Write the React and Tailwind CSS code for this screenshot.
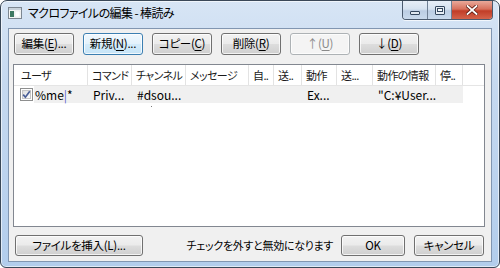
import React from 'react';

const cols = [
  { label: 'ユーザ', w: 74 },
  { label: 'コマンド', w: 44 },
  { label: 'チャンネル', w: 54 },
  { label: 'メッセージ', w: 63 },
  { label: '自..', w: 25 },
  { label: '送..', w: 28 },
  { label: '動作', w: 35 },
  { label: '送...', w: 36 },
  { label: '動作の情報', w: 63 },
  { label: '停..', w: 27 },
];

const row = ['', 'Priv...', '#dsou...', '', '', '', 'Ex...', '', '"C:¥User...', ''];

function Btn({ children, className = '', kind = 'normal' }) {
  const look = {
    normal:
      'border-[#707070] text-black bg-[linear-gradient(to_bottom,#f2f2f2_0%,#ebebeb_48%,#dddddd_52%,#cfcfcf_100%)]',
    hot:
      'border-[#3c7fb1] text-black bg-[linear-gradient(to_bottom,#f1f8fd_0%,#e3f2fc_48%,#d3ebfa_52%,#c6e4f7_100%)]',
    disabled: 'border-[#adb2b5] text-[#8a8a8a] bg-[#f4f4f4]',
  }[kind];
  return (
    <div
      className={`flex items-center justify-center rounded-[3px] border text-[11.5px] tracking-[-0.3px] leading-none whitespace-nowrap shadow-[inset_0_0_0_1px_rgba(255,255,255,0.75)] ${look} ${className}`}
    >
      {children}
    </div>
  );
}

function U({ children }) {
  return <span className="underline underline-offset-[2px]">{children}</span>;
}

function CheckBox() {
  return (
    <svg width="13" height="13" viewBox="0 0 13 13" className="shrink-0">
      <defs>
        <linearGradient id="cb" x1="0" y1="0" x2="1" y2="1">
          <stop offset="0" stopColor="#dcdcdc" />
          <stop offset="1" stopColor="#ffffff" />
        </linearGradient>
      </defs>
      <rect x="0.5" y="0.5" width="12" height="12" fill="#fff" stroke="#8e8f8f" />
      <rect x="2.5" y="2.5" width="8" height="8" fill="url(#cb)" stroke="#c6c6c6" />
      <path d="M3.2 6.6 L5.4 9.2 L9.8 3.2" fill="none" stroke="#4a5f97" strokeWidth="1.7" />
    </svg>
  );
}

function AppIcon() {
  return (
    <svg width="14" height="12" viewBox="0 0 14 12">
      <rect x="0.5" y="0.5" width="13" height="11" fill="#f7f7f7" stroke="#7d8792" />
      <rect x="1" y="1" width="12" height="2" fill="#c9d3dc" />
      <rect x="2" y="4" width="4" height="6" fill="#3f7a63" />
      <rect x="7" y="4" width="5" height="6" fill="#ffffff" stroke="#d7dde2" strokeWidth="0.5" />
    </svg>
  );
}

function CaptionButtons() {
  return (
    <div className="flex self-start h-[19px] rounded-b-[4px] border border-t-0 border-[#4b5a6e] overflow-hidden shadow-[0_1px_0_rgba(255,255,255,0.7)]">
      <div className="w-[25px] flex items-center justify-center border-r border-[#6f7f94] bg-[linear-gradient(to_bottom,#e7eef7_0%,#d6e2f0_45%,#bccde3_55%,#c9d9ec_100%)]">
        <div className="w-[10px] h-[4px] mt-[5px] rounded-[1px] border border-[#35475e] bg-[#dfe7f0]" />
      </div>
      <div className="w-[24px] flex items-center justify-center border-r border-[#6f7f94] bg-[linear-gradient(to_bottom,#e7eef7_0%,#d6e2f0_45%,#bccde3_55%,#c9d9ec_100%)]">
        <div className="w-[10px] h-[9px] rounded-[1px] border border-[#35475e] flex items-center justify-center bg-[#e7edf4]">
          <div className="w-[6px] h-[4px] border border-[#35475e] bg-[#f4f7fa]" />
        </div>
      </div>
      <div className="w-[40px] flex items-center justify-center bg-[linear-gradient(to_bottom,#e9a99a_0%,#d7705c_45%,#c13d27_55%,#d4634b_100%)]">
        <svg width="12" height="10" viewBox="0 0 12 10">
          <path d="M1.5 1 L10.5 9 M10.5 1 L1.5 9" stroke="#5b1a10" strokeWidth="3.4" strokeLinecap="square" />
          <path d="M1.5 1 L10.5 9 M10.5 1 L1.5 9" stroke="#ffffff" strokeWidth="1.8" strokeLinecap="square" />
        </svg>
      </div>
    </div>
  );
}

export default function App() {
  return (
    <div className="w-[500px] h-[268px] bg-white font-['Noto_Sans_CJK_JP','Noto_Sans',sans-serif] [font-feature-settings:'palt']">
      <div className="w-full h-full flex flex-col rounded-t-[7px] rounded-b-[6px] border border-[#3a4858] bg-[linear-gradient(to_bottom,#d7e5f5_0%,#c6d9f0_30%,#b2cdec_100%)] shadow-[inset_0_0_0_1px_rgba(255,255,255,0.6)]">
        <div className="h-[27px] flex items-start pl-[7px] pr-[6px] shrink-0">
          <div className="flex items-center gap-[6px] mt-[6px]">
            <AppIcon />
            <span className="text-[12px] tracking-[-0.6px] leading-none text-black">マクロファイルの編集 - 棒読み</span>
          </div>
          <div className="ml-auto">
            <CaptionButtons />
          </div>
        </div>

        <div className="flex-1 mx-[7px] mb-[5px] border border-[#8196b1] bg-[#f0f0f0] flex flex-col px-[4px] pt-[4px]">
          <div className="flex gap-[9px] pl-[1px]">
            <Btn className="w-[60px] h-[22px]">編集(<U>E</U>)...</Btn>
            <Btn className="w-[60px] h-[22px]" kind="hot">新規(<U>N</U>)...</Btn>
            <Btn className="w-[60px] h-[22px]">コピー(<U>C</U>)</Btn>
            <Btn className="w-[60px] h-[22px]">削除(<U>R</U>)</Btn>
            <Btn className="w-[60px] h-[22px]" kind="disabled">↑(<U>U</U>)</Btn>
            <Btn className="w-[60px] h-[22px]">↓(<U>D</U>)</Btn>
          </div>

          <div className="mt-[9px] w-[472px] h-[163px] border border-[#828790] bg-white flex flex-col">
            <div className="flex h-[21px] border-b border-[#e5e5e5] bg-white">
              {cols.map((c, i) => (
                <div
                  key={i}
                  style={{ width: c.w }}
                  className={`shrink-0 flex items-center border-r border-[#e3e3e3] text-[11px] tracking-[-0.6px] leading-none text-[#1a1a1a] whitespace-nowrap overflow-hidden ${i === 0 ? 'pl-[7px]' : 'pl-[4px]'}`}
                >
                  {c.label}
                </div>
              ))}
              <div className="flex-1" />
            </div>
            <div className="flex h-[17px] items-center">
              <div className="w-[20px] shrink-0 flex items-center justify-end pr-[1px]">
                <CheckBox />
              </div>
              <div className="flex h-full bg-[#f0f0f0]">
                <div className="w-[54px] shrink-0 flex items-center text-[12px] leading-none text-black pl-[1px]">
                  %me<span className="text-[#5b63c8]">|</span>*
                </div>
                {row.slice(1).map((t, i) => (
                  <div
                    key={i}
                    style={{ width: cols[i + 1].w }}
                    className="shrink-0 flex items-center pl-[5px] text-[12px] leading-none text-black whitespace-nowrap overflow-hidden"
                  >
                    {t}
                  </div>
                ))}
              </div>
            </div>
            <div className="ml-[137px] mt-[3px] w-[1px] h-[1px] bg-[#7a7a7a]" />
          </div>

          <div className="mt-[8px] flex items-center">
            <Btn className="w-[128px] h-[21px] ml-[2px]">ファイルを挿入(L)...</Btn>
            <span className="ml-auto text-[11px] tracking-[-0.3px] leading-none text-black">チェックを外すと無効になります</span>
            <Btn className="w-[64px] h-[21px] ml-[8px]">OK</Btn>
            <Btn className="w-[70px] h-[21px] ml-[9px] mr-[3px]">キャンセル</Btn>
          </div>
        </div>
      </div>
    </div>
  );
}
